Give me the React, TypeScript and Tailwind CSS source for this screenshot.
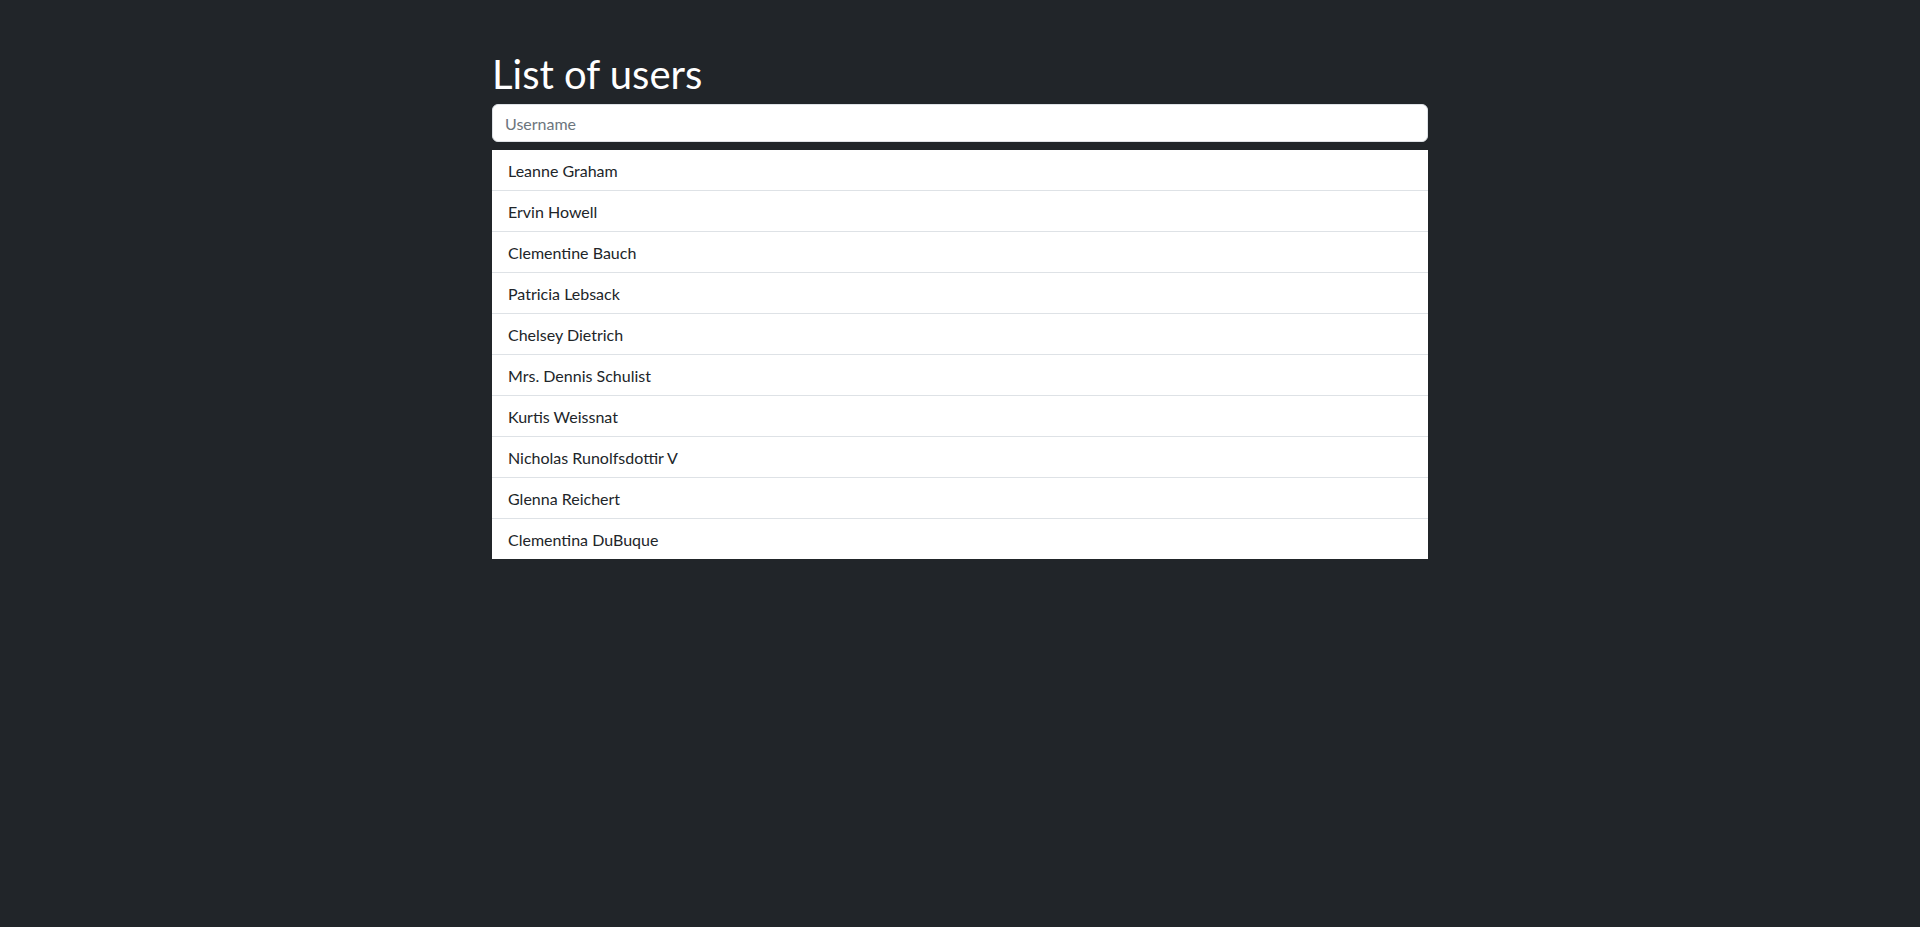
const users = [
  "Leanne Graham",
  "Ervin Howell",
  "Clementine Bauch",
  "Patricia Lebsack",
  "Chelsey Dietrich",
  "Mrs. Dennis Schulist",
  "Kurtis Weissnat",
  "Nicholas Runolfsdottir V",
  "Glenna Reichert",
  "Clementina DuBuque",
];

export default function App() {
  return (
    <div className="min-h-screen bg-[#212529] font-['Lato',sans-serif] text-[#212529]">
      <div className="mx-auto w-[936px] pt-[50px]">
        <h1 className="mb-[6px] text-[40px] font-normal leading-[48px] text-white">List of users</h1>
        <input
          type="text"
          placeholder="Username"
          className="block h-[38px] w-full rounded-md border border-[#dee2e6] bg-white px-3 text-base text-[#212529] outline-none placeholder:text-[#6c757d]"
        />
        <ul className="mt-2 bg-white">
          {users.map((name, i) => (
            <li
              key={name}
              className={`px-4 pt-[9px] pb-[7px] text-base leading-6 ${i < users.length - 1 ? "border-b border-[#dee2e6]" : ""}`}
            >
              {name}
            </li>
          ))}
        </ul>
      </div>
    </div>
  );
}
